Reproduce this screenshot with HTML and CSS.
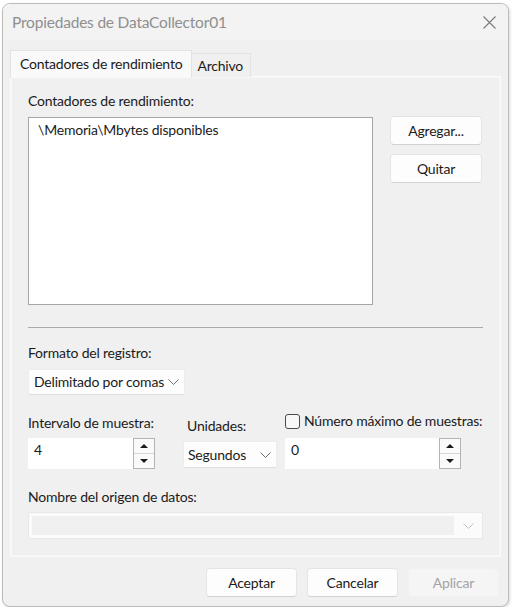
FILE: index.html
```html
<!DOCTYPE html>
<html lang="es">
<head>
    <meta charset="UTF-8">
    <title>Propiedades de DataCollector01</title>
    <link rel="stylesheet" href="styles.css">
</head>
<body>
    <div class="window">
        <div class="titlebar">
            <span class="title">Propiedades de DataCollector01</span>
            <svg class="close" width="13" height="13" viewBox="0 0 13 13">
                <path d="M0.5 0.5 L12.5 12.5 M12.5 0.5 L0.5 12.5" stroke="#7a7a7a" stroke-width="1.1" fill="none"/>
            </svg>
        </div>

        <div class="main">
            <div class="tabs">
                <div class="tab active">Contadores de rendimiento</div>
                <div class="tab">Archivo</div>
            </div>

            <!-- Contadores tab -->
            <div class="panel">
                <div class="caption first">Contadores de rendimiento:</div>
                <div class="counters">
                    <div class="listbox">
                        <div class="list-item">\Memoria\Mbytes disponibles</div>
                    </div>
                    <div class="side-buttons">
                        <button class="btn">Agregar...</button>
                        <button class="btn">Quitar</button>
                    </div>
                </div>

                <div class="separator"></div>

                <div class="caption format-caption">Formato del registro:</div>
                <div class="combo format-combo">
                    <span>Delimitado por comas</span>
                    <svg class="chevron" width="11" height="6" viewBox="0 0 11 6"><path d="M0.5 0.5 L5.5 5.5 L10.5 0.5" stroke="#6e6e6e" fill="none"/></svg>
                </div>

                <div class="sample-row">
                    <div class="col col-interval">
                        <div class="caption">Intervalo de muestra:</div>
                        <div class="spin">
                            <div class="spin-value">4</div>
                            <div class="spin-buttons">
                                <div class="spin-btn"><span class="arrow up"></span></div>
                                <div class="spin-btn"><span class="arrow down"></span></div>
                            </div>
                        </div>
                    </div>
                    <div class="col col-units">
                        <div class="caption">Unidades:</div>
                        <div class="combo units-combo">
                            <span>Segundos</span>
                            <svg class="chevron" width="11" height="6" viewBox="0 0 11 6"><path d="M0.5 0.5 L5.5 5.5 L10.5 0.5" stroke="#6e6e6e" fill="none"/></svg>
                        </div>
                    </div>
                    <div class="col col-max">
                        <label class="check">
                            <span class="checkbox"></span>
                            <span>Número máximo de muestras:</span>
                        </label>
                        <div class="spin">
                            <div class="spin-value">0</div>
                            <div class="spin-buttons">
                                <div class="spin-btn"><span class="arrow up"></span></div>
                                <div class="spin-btn"><span class="arrow down"></span></div>
                            </div>
                        </div>
                    </div>
                </div>

                <div class="caption source-caption">Nombre del origen de datos:</div>
                <div class="combo source-combo">
                    <div class="source-field"></div>
                    <svg class="chevron" width="11" height="6" viewBox="0 0 11 6"><path d="M0.5 0.5 L5.5 5.5 L10.5 0.5" stroke="#c4c4c4" fill="none"/></svg>
                </div>
            </div>
        </div>

        <div class="footer">
            <button class="btn">Aceptar</button>
            <button class="btn">Cancelar</button>
            <button class="btn disabled">Aplicar</button>
        </div>
    </div>
</body>
</html>
```

FILE: styles.css
```css
* {
    margin: 0;
    padding: 0;
    box-sizing: border-box;
}

body {
    font-family: Lato, 'Segoe UI', sans-serif;
    font-size: 14px;
    letter-spacing: -0.2px;
    line-height: 20px;
    color: #1b1b1b;
    background: #ffffff;
}

.window {
    width: 507px;
    height: 604px;
    margin: 3px 0 0 2px;
    background: #f0f0f0;
    border: 1px solid #bcbcbc;
    border-radius: 8px;
    box-shadow: 1px 1px 3px rgba(0,0,0,0.15);
    display: flex;
    flex-direction: column;
    overflow: hidden;
}

.titlebar {
    height: 36px;
    flex: none;
    display: flex;
    align-items: center;
    justify-content: space-between;
    padding: 0 12px 0 9px;
    background: #f3f3f3;
}

.title {
    font-size: 15.5px;
    color: #8f8f8f;
}

.close {
    margin-top: 1px;
}

.main {
    padding: 10px 7px 0;
}

.tabs {
    display: flex;
    align-items: flex-end;
    height: 27px;
    position: relative;
    z-index: 1;
}

.tab {
    height: 24px;
    padding: 0 7px 0 5px;
    line-height: 24px;
    white-space: nowrap;
    background: #f0f0f0;
    border: 1px solid #e3e3e3;
    border-bottom: none;
    border-left: none;
}

.tab.active {
    height: 28px;
    margin-bottom: -1px;
    padding: 0 9px 0 9px;
    line-height: 25px;
    background: #f9f9f9;
    border-left: 1px solid #e3e3e3;
}

.panel {
    height: 481px;
    margin-top: -1px;
    padding: 14px 17px 0;
    background: #f0f0f0;
    border: 1px solid #fbfbfb;
    box-shadow: inset 0 0 0 1px #f6f6f6;
}

.caption {
    height: 20px;
    white-space: nowrap;
}

.counters {
    display: flex;
    gap: 17px;
    margin-top: 6px;
}

.listbox {
    width: 345px;
    height: 188px;
    background: #ffffff;
    border: 1px solid #a6a6a6;
    padding: 1px 9px;
}

.list-item {
    height: 22px;
    line-height: 22px;
    white-space: nowrap;
}

.side-buttons {
    display: flex;
    flex-direction: column;
    gap: 9px;
    margin-top: -1px;
}

.btn {
    width: 92px;
    height: 29px;
    font: inherit;
    letter-spacing: inherit;
    color: #1b1b1b;
    background: #fdfdfd;
    border: 1px solid #e4e4e4;
    border-bottom-color: #d2d2d2;
    border-radius: 4px;
}

.separator {
    height: 1px;
    margin-top: 22px;
    background: #a9a9a9;
}

.format-caption {
    margin-top: 15px;
}

.combo {
    display: flex;
    align-items: center;
    justify-content: space-between;
    white-space: nowrap;
    background: #fdfdfd;
    border: 1px solid #ececec;
    border-bottom-color: #dedede;
    border-radius: 2px;
}

.chevron {
    flex: none;
}

.format-combo {
    width: 157px;
    height: 26px;
    margin-top: 6px;
    padding: 0 5px 0 5px;
}

.sample-row {
    display: flex;
}

.col {
    display: flex;
    flex-direction: column;
}

.col-interval {
    width: 127px;
    padding-top: 18px;
}

.col-units {
    width: 94px;
    margin-left: 28px;
    padding-top: 21px;
}

.col-units .caption {
    padding-left: 4px;
}

.col-max {
    width: 176px;
    margin-left: 8px;
    padding-top: 16px;
}

.spin {
    display: flex;
    height: 31px;
    margin-top: 5px;
    background: #ffffff;
}

.col-max .spin {
    margin-top: 7px;
}

.spin-value {
    flex: 1;
    padding: 2px 6px;
}

.spin-buttons {
    width: 22px;
    display: flex;
    flex-direction: column;
    border: 1px solid #b4b4b4;
    background: #f4f4f4;
}

.spin-btn {
    flex: 1;
    display: flex;
    align-items: center;
    justify-content: center;
    background: #fafafa;
}

.spin-btn + .spin-btn {
    border-top: 1px solid #d6d6d6;
}

.arrow {
    width: 0;
    height: 0;
    border-left: 4px solid transparent;
    border-right: 4px solid transparent;
}

.arrow.up {
    border-bottom: 4px solid #1b1b1b;
}

.arrow.down {
    border-top: 4px solid #1b1b1b;
}

.units-combo {
    height: 27px;
    margin-top: 5px;
    padding: 0 5px 0 4px;
}

.check {
    display: flex;
    align-items: center;
    gap: 4px;
    height: 20px;
    white-space: nowrap;
}

.checkbox {
    flex: none;
    width: 15px;
    height: 15px;
    border: 1px solid #4a4a4a;
    border-radius: 3px;
    background: #f7f7f7;
}

.source-caption {
    margin-top: 18px;
}

.source-combo {
    height: 27px;
    margin-top: 5px;
    padding: 3px 0 3px 3px;
    background: #fbfbfb;
    border-color: #e8e8e8;
}

.source-field {
    flex: 1;
    height: 100%;
    background: #f0f0f0;
}

.source-combo .chevron {
    margin: 0 8px 0 9px;
}

.footer {
    display: flex;
    justify-content: flex-end;
    gap: 10px;
    padding: 11px 9px 0;
}

.footer .btn {
    width: 91px;
}

.btn.disabled {
    color: #a3a3a3;
    background: #f5f5f5;
    border-color: #f1f1f1;
}
```
